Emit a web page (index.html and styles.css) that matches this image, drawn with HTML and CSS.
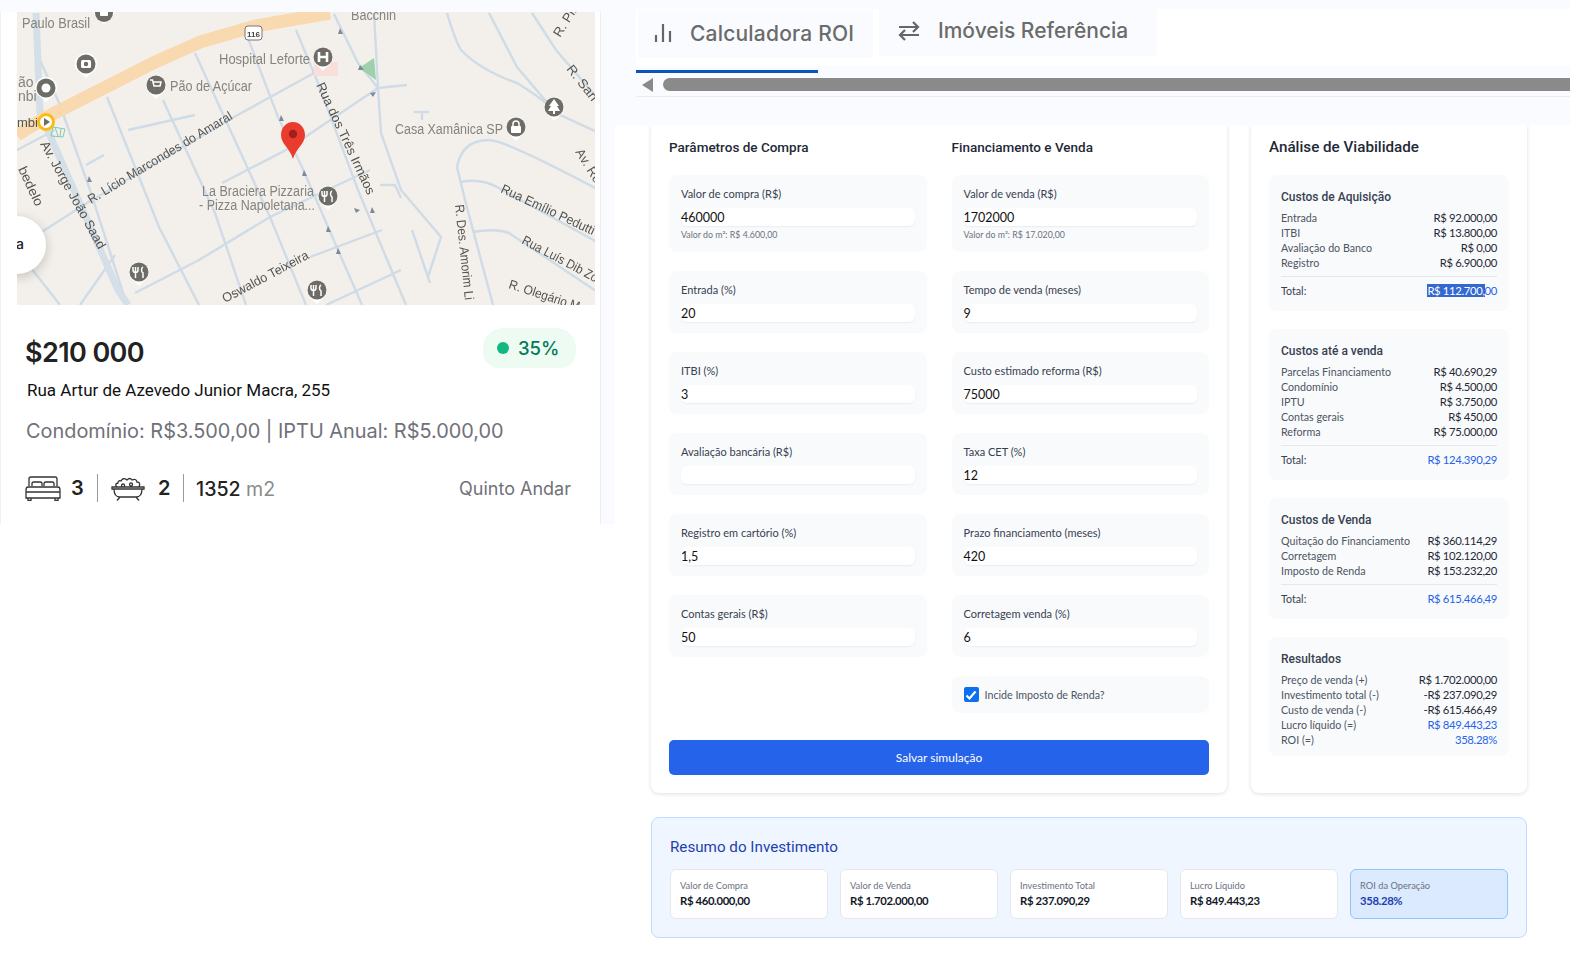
FILE: index.html
```
<!DOCTYPE html>
<html lang="pt-BR">
<head>
<meta charset="utf-8">
<title>Calculadora ROI</title>
<link rel="stylesheet" href="styles.css">
</head>
<body>
<div class="app">
  <section class="listing">
    <div class="listing-card">
      <div class="map">
        <svg class="map-svg" viewBox="17 12 578 293" width="578" height="293">
          <rect x="17" y="12" width="578" height="293" fill="#f3f0eb"/>
          <g class="roads">
            <path d="M40 233L87 203L234 117L314 73"/>
            <path d="M222 183L286 150L378 88L407 85"/>
            <path d="M334 14L358 63L378 88L381 133L401 190L441 237L428 277"/>
            <path d="M296 30L318 83L358 190L406 305"/>
            <path d="M246 33L278 117L302 167L338 250L362 305"/>
            <path d="M195 53L238 147L270 217L306 305"/>
            <path d="M107 97L159 227L199 305"/>
            <path d="M163 100L215 213L246 305"/>
            <path d="M135 293L199 260L270 217L342 183L370 170"/>
            <path d="M326 305L401 270"/>
            <path d="M310 257L382 230"/>
            <path d="M457 167Q462 140 489 140Q505 140 599 190"/>
            <path d="M457 167L465 200L493 305"/>
            <path d="M461 182Q480 178 497 187L599 243"/>
            <path d="M473 232Q495 228 509 233L599 293"/>
            <path d="M447 13Q455 40 461 50Q480 70 517 83Q545 100 556 113L599 133"/>
            <path d="M489 13L517 67L556 113"/>
            <path d="M532 13L556 50L599 100"/>
            <path d="M374 13L378 88"/>
            <path d="M128 130L195 115M86 165L104 155M17 150L55 130"/>
            <path d="M40 60L60 105L90 190L127 305"/>
            <path d="M80 305L115 255M17 250L60 305"/>
            <path d="M414 112H429M422 112V120M380 185L395 185L401 198M412 230L430 283"/>
          </g>
          <path class="avenue" d="M36 13L40 113L118 290L128 305"/>
          <path class="highway" d="M17 135L45 118L155 62L200 42L255 26L330 13"/>
          <path class="park" d="M359 68L374 58L376 80Z"/>
          <rect class="hosp" x="314" y="62" width="24" height="14"/>
          <g class="shields"><rect x="245" y="26" width="17" height="14" rx="3"/></g>
          <text class="shield-t" x="253.500" y="37">116</text>
          <g class="pois">
            <path class="halo" d="M94 11a10 10 0 0 1 20 0c0 7-6 9-10 13c-4-4-10-6-10-13z"/>
            <circle cx="104" cy="13" r="9"/>
            <path class="halo" d="M75 64a11 11 0 0 1 22 0c0 7-7 9-11 14c-4-5-11-7-11-14z"/>
            <circle cx="86" cy="64" r="9.500"/>
            <path class="halo" d="M35 88a11 11 0 0 1 22 0c0 7-7 9-11 14c-4-5-11-7-11-14z"/>
            <circle cx="46" cy="88" r="9.500"/>
            <path class="halo" d="M146 85a10 10 0 0 1 20 0c0 7-6 9-10 14c-4-5-10-7-10-14z"/>
            <circle cx="156" cy="85" r="9.500"/>
            <path class="halo" d="M313 57a10 10 0 0 1 20 0c0 7-6 9-10 14c-4-5-10-7-10-14z"/>
            <circle cx="323" cy="57" r="9.500"/>
            <path class="halo" d="M506 127a10 10 0 0 1 20 0c0 7-6 9-10 14c-4-5-10-7-10-14z"/>
            <circle cx="516" cy="127" r="9.500"/>
            <path class="halo" d="M544 107a10 10 0 0 1 20 0c0 7-6 9-10 14c-4-5-10-7-10-14z"/>
            <circle cx="554" cy="107" r="9.500"/>
            <path class="halo" d="M318 196a10 10 0 0 1 20 0c0 7-6 9-10 14c-4-5-10-7-10-14z"/>
            <circle cx="328" cy="196" r="9.500"/>
            <path class="halo" d="M129 272a10 10 0 0 1 20 0c0 7-6 9-10 14c-4-5-10-7-10-14z"/>
            <circle cx="139" cy="272" r="9.500"/>
            <path class="halo" d="M307 290a10 10 0 0 1 20 0c0 7-6 9-10 14c-4-5-10-7-10-14z"/>
            <circle cx="317" cy="290" r="9.500"/>
          </g>
          <g class="poi-glyphs">
            <rect x="100" y="10" width="8" height="6" rx="1"/>
            <rect x="81" y="60" width="10" height="8" rx="1.500"/><circle class="dk" cx="86" cy="64" r="2.200"/>
            <circle cx="46" cy="88" r="4.500"/>
            <path class="cart" d="M150 80h2.500l1.500 6h6l1-4h-7.500M154.500 89.500h.1M159.500 89.500h.1"/>
            <path class="cart cart-b" d="M319 52v10M327 52v10M319 57h8"/>
            <rect x="511" y="126" width="10" height="7" rx="1"/>
            <path class="cart" d="M513 126v-2a3 3 0 0 1 6 0v2"/>
            <path d="M554 99l5 7h-2l3 5h-5v3h-2v-3h-5l3-5h-2z"/>
            <path class="cart" d="M322 191v3a2.500 2.500 0 0 0 5 0v-3M324.500 191v11M332 191c-2 1-2 5 0 6v5"/>
            <path class="cart" d="M133 267v3a2.500 2.500 0 0 0 5 0v-3M135.500 267v11M143 267c-2 1-2 5 0 6v5"/>
            <path class="cart" d="M311 285v3a2.500 2.500 0 0 0 5 0v-3M313.500 285v11M321 285c-2 1-2 5 0 6v5"/>
          </g>
          <circle class="ring" cx="46" cy="122" r="7.500"/>
          <path class="ring-play" d="M44 118l6 4l-6 4z"/>
          <path class="tracks" d="M53 127l12 2l-2 8l-12-1zM55 127l3 9M61 129l-1 8"/>
          <g class="arrows">
            <path d="M340 28l3 6h-5zM281 115l3 6h-5zM304 170l3 6h-5zM328 226l3 6h-5zM338 248l3 6h-5z"/>
            <path d="M89 176l3 6h-5zM372 207l3 6h-5zM360 65l4 5h-6zM354 208l6 2l-4 3zM370 93l6-1l-3 5z"/>
          </g>
          <g class="labels">
            <text x="22" y="28" textLength="68" lengthAdjust="spacingAndGlyphs">Paulo Brasil</text>
            <text x="351" y="20" textLength="45" lengthAdjust="spacingAndGlyphs">Bacchin</text>
            <text x="219" y="64" textLength="91" lengthAdjust="spacingAndGlyphs">Hospital Leforte</text>
            <text x="170" y="91" textLength="82" lengthAdjust="spacingAndGlyphs">Pão de Açúcar</text>
            <text x="395" y="134" textLength="108" lengthAdjust="spacingAndGlyphs">Casa Xamânica SP</text>
            <text x="202" y="196" textLength="112" lengthAdjust="spacingAndGlyphs">La Braciera Pizzaria</text>
            <text x="199" y="210" textLength="116" lengthAdjust="spacingAndGlyphs">- Pizza Napoletana...</text>
            <text x="18" y="87">ão</text>
            <text x="18" y="101">nbi</text>
          </g>
          <g class="labels dark">
            <text x="17" y="127">mbi</text>
            <text transform="translate(40 144) rotate(61)" textLength="121" lengthAdjust="spacingAndGlyphs">Av. Jorge João Saad</text>
            <text transform="translate(18 169) rotate(65)" textLength="42" lengthAdjust="spacingAndGlyphs">bedelo</text>
            <text transform="translate(91 204) rotate(-31)" textLength="166" lengthAdjust="spacingAndGlyphs">R. Lício Marcondes do Amaral</text>
            <text transform="translate(316 85) rotate(65)" textLength="122" lengthAdjust="spacingAndGlyphs">Rua dos Três Irmãos</text>
            <text transform="translate(225 303) rotate(-28)" textLength="96" lengthAdjust="spacingAndGlyphs">Oswaldo Teixeira</text>
            <text transform="translate(455 205) rotate(84)" textLength="96" lengthAdjust="spacingAndGlyphs">R. Des. Amorim Li</text>
            <text transform="translate(500 192) rotate(25)" textLength="102" lengthAdjust="spacingAndGlyphs">Rua Emílio Pedutti</text>
            <text transform="translate(521 243) rotate(28)" textLength="84" lengthAdjust="spacingAndGlyphs">Rua Luís Dib Zo</text>
            <text transform="translate(508 288) rotate(18)" textLength="74" lengthAdjust="spacingAndGlyphs">R. Olegário M</text>
            <text transform="translate(560 38) rotate(-58)" textLength="32" lengthAdjust="spacingAndGlyphs">R. Pil</text>
            <text transform="translate(566 69) rotate(52)" textLength="42" lengthAdjust="spacingAndGlyphs">R. San</text>
            <text transform="translate(575 152) rotate(58)" textLength="38" lengthAdjust="spacingAndGlyphs">Av. Ro</text>
          </g>
          <path class="pin" d="M293 122c7 0 12 6 12 13c0 9-9 13-12 24c-3-11-12-15-12-24c0-7 5-13 12-13z"/>
          <circle class="pin-dot" cx="293" cy="134" r="4.200"/>
        </svg>
        <div class="map-bubble"><span>a</span></div>
      </div>
      <div class="info">
        <div class="price-row">
          <h2 class="price">$210 000</h2>
          <div class="badge"><i class="badge-dot"></i>35%</div>
        </div>
        <p class="address">Rua Artur de Azevedo Junior Macra, 255</p>
        <p class="fees">Condomínio: R$3.500,00 | IPTU Anual: R$5.000,00</p>
        <div class="stats">
          <svg class="ic-bed" viewBox="0 0 36 26" width="36" height="26">
            <path d="M4 11V3.500Q4 2 6 2H30Q32 2 32 3.500V11M7 11V8.500Q7 7 9 7H15Q17 7 17 8.500V11M19 11V8.500Q19 7 21 7H27Q29 7 29 8.500V11M3 12H33Q35 12 35 15V23H1V15Q1 12 3 12ZM1 17H35M3 23V25.500H6V23M30 23V25.500H33V23"/>
          </svg>
          <b class="stat-n">3</b>
          <span class="sep"></span>
          <svg class="ic-bath" viewBox="0 0 34 26" width="34" height="26">
            <path d="M1 12H33V14H1ZM3 14Q3 22 9 22H25Q31 22 31 14M9 22L6 25.500M25 22L28 25.500M6 12Q3 9 7 8Q7 5 10 6Q12 2 16 5Q19 2 21 5Q25 3 26 7Q30 7 28 12M12 9a1.500 1.500 0 1 0 .1 0M20 8a1.500 1.500 0 1 0 .1 0"/>
          </svg>
          <b class="stat-n">2</b>
          <span class="sep"></span>
          <span class="area"><b>1352</b> m2</span>
          <span class="source">Quinto Andar</span>
        </div>
      </div>
    </div>
  </section>

  <main class="roi">
    <div class="roi-top">
      <nav class="tabs">
        <a class="tab tab-active">
          <svg class="tab-ic" viewBox="0 0 18 20" width="18" height="20"><path d="M2 19v-7M9 19V1M16 19v-11"/></svg>
          <span>Calculadora ROI</span>
        </a>
        <a class="tab tab-other">
          <svg class="tab-ic" viewBox="0 0 22 20" width="22" height="20"><path d="M1 6H20M15 1L20 6L15 11M21 14H2M7 9L2 14L7 19"/></svg>
          <span>Imóveis Referência</span>
        </a>
      </nav>
      <div class="indicator"></div>
      <div class="scrollbar">
        <i class="sb-arrow"></i>
        <i class="sb-thumb"></i>
      </div>
    </div>

    <div class="content">
      <div class="cards">
        <section class="card form-card">
          <div class="form-grid">
            <div class="col">
              <h3 class="card-title">Parâmetros de Compra</h3>
              <div class="field"><label>Valor de compra (R$)</label><div class="input">460000</div><small>Valor do m²: R$ 4.600,00</small></div>
              <div class="field"><label>Entrada (%)</label><div class="input">20</div></div>
              <div class="field"><label>ITBI (%)</label><div class="input">3</div></div>
              <div class="field"><label>Avaliação bancária (R$)</label><div class="input"></div></div>
              <div class="field"><label>Registro em cartório (%)</label><div class="input">1,5</div></div>
              <div class="field"><label>Contas gerais (R$)</label><div class="input">50</div></div>
            </div>
            <div class="col">
              <h3 class="card-title">Financiamento e Venda</h3>
              <div class="field"><label>Valor de venda (R$)</label><div class="input">1702000</div><small>Valor do m²: R$ 17.020,00</small></div>
              <div class="field"><label>Tempo de venda (meses)</label><div class="input">9</div></div>
              <div class="field"><label>Custo estimado reforma (R$)</label><div class="input">75000</div></div>
              <div class="field"><label>Taxa CET (%)</label><div class="input">12</div></div>
              <div class="field"><label>Prazo financiamento (meses)</label><div class="input">420</div></div>
              <div class="field"><label>Corretagem venda (%)</label><div class="input">6</div></div>
              <div class="field check-field">
                <span class="checkbox"><svg viewBox="0 0 14 14" width="14" height="14"><path d="M2.500 7.500L5.500 10.500L11.500 3.500"/></svg></span>
                Incide Imposto de Renda?
              </div>
            </div>
          </div>
          <button class="save">Salvar simulação</button>
        </section>

        <section class="card analysis-card">
          <h3 class="card-title analysis-title">Análise de Viabilidade</h3>
          <div class="block">
            <h4>Custos de Aquisição</h4>
            <div class="line"><span>Entrada</span><b>R$ 92.000,00</b></div>
            <div class="line"><span>ITBI</span><b>R$ 13.800,00</b></div>
            <div class="line"><span>Avaliação do Banco</span><b>R$ 0,00</b></div>
            <div class="line"><span>Registro</span><b>R$ 6.900,00</b></div>
            <div class="line total"><span>Total:</span><b class="blue"><mark>R$ 112.700,</mark>00</b></div>
          </div>
          <div class="block">
            <h4>Custos até a venda</h4>
            <div class="line"><span>Parcelas Financiamento</span><b>R$ 40.690,29</b></div>
            <div class="line"><span>Condomínio</span><b>R$ 4.500,00</b></div>
            <div class="line"><span>IPTU</span><b>R$ 3.750,00</b></div>
            <div class="line"><span>Contas gerais</span><b>R$ 450,00</b></div>
            <div class="line"><span>Reforma</span><b>R$ 75.000,00</b></div>
            <div class="line total"><span>Total:</span><b class="blue">R$ 124.390,29</b></div>
          </div>
          <div class="block">
            <h4>Custos de Venda</h4>
            <div class="line"><span>Quitação do Financiamento</span><b>R$ 360.114,29</b></div>
            <div class="line"><span>Corretagem</span><b>R$ 102.120,00</b></div>
            <div class="line"><span>Imposto de Renda</span><b>R$ 153.232,20</b></div>
            <div class="line total"><span>Total:</span><b class="blue">R$ 615.466,49</b></div>
          </div>
          <div class="block block-last">
            <h4>Resultados</h4>
            <div class="line"><span>Preço de venda (+)</span><b>R$ 1.702.000,00</b></div>
            <div class="line"><span>Investimento total (-)</span><b>-R$ 237.090,29</b></div>
            <div class="line"><span>Custo de venda (-)</span><b>-R$ 615.466,49</b></div>
            <div class="line"><span>Lucro líquido (=)</span><b class="blue">R$ 849.443,23</b></div>
            <div class="line"><span>ROI (=)</span><b class="blue">358.28%</b></div>
          </div>
        </section>
      </div>

      <section class="summary">
        <h3>Resumo do Investimento</h3>
        <div class="summary-grid">
          <div class="stat"><span>Valor de Compra</span><b>R$ 460.000,00</b></div>
          <div class="stat"><span>Valor de Venda</span><b>R$ 1.702.000,00</b></div>
          <div class="stat"><span>Investimento Total</span><b>R$ 237.090,29</b></div>
          <div class="stat"><span>Lucro Líquido</span><b>R$ 849.443,23</b></div>
          <div class="stat stat-hl"><span>ROI da Operação</span><b>358.28%</b></div>
        </div>
      </section>
    </div>
  </main>
</div>
</body>
</html>
```
FILE: styles.css
```
* { box-sizing: border-box; }
html, body { margin: 0; padding: 0; background: #fff; }
body { width: 1570px; height: 962px; overflow: hidden; font-family: Lato, Roboto, "Liberation Sans", sans-serif; color: #1f2937; }
.app { display: flex; align-items: flex-start; }

/* listing */
.listing { width: 615px; height: 524px; flex: none; background: #fafbfe; padding-top: 12px; }
.listing-card { width: 601px; height: 512px; background: #fff; border-left: 1px solid #f1f1f1; border-right: 1px solid #eeeeee; }
.map { position: relative; width: 578px; height: 293px; margin-left: 16px; overflow: hidden; }
.map-svg { display: block; filter: blur(0.35px); }
.roads path { fill: none; stroke: #cfdbe6; stroke-width: 2.4; }
.avenue { fill: none; stroke: #d5dfe7; stroke-width: 7; }
.highway { fill: none; stroke: #f9d9af; stroke-width: 13; }
.park { fill: #9fd0ac; }
.hosp { fill: #f8dfdc; }
.shields rect { fill: #fff; stroke: #777; }
.shield-t { font: 700 8px "Liberation Sans", sans-serif; fill: #444; text-anchor: middle; }
.pois circle { fill: #6d6c66; }
.halo { fill: #fff; }
.poi-glyphs { fill: #fff; }
.poi-glyphs .dk { fill: #6d6c66; }
.poi-glyphs .cart { fill: none; stroke: #fff; stroke-width: 1.5; }
.poi-glyphs .cart-b { stroke-width: 2.6; }
.ring { fill: #fff; stroke: #fbbc12; stroke-width: 3; }
.ring-play { fill: #6d6c66; }
.tracks { fill: none; stroke: #7fcdb0; stroke-width: 1; }
.arrows { fill: #7d8a98; }
.labels text { font: 14px "Liberation Sans", sans-serif; fill: #85837e; }
.labels.dark text { font-size: 13px; fill: #54534f; }
.pin { fill: #ea3b2f; }
.pin-dot { fill: #a3201a; }
.map-bubble { position: absolute; left: -29px; top: 204px; width: 58px; height: 58px; border-radius: 50%; background: #fff; box-shadow: 0 3px 12px rgba(0,0,0,.2); display: flex; align-items: center; justify-content: flex-end; padding: 0 22px 4px 0; font: 500 14px Inter, sans-serif; color: #222; }
.info { padding: 22px 24px 0 24px; }
.price-row { display: flex; justify-content: space-between; align-items: flex-start; height: 52px; padding-top: 1px; }
.price { margin: 0; padding-top: 8px; font: 600 27px/34px Inter, sans-serif; color: #222; letter-spacing: -.6px; }
.badge { width: 93px; height: 40px; border-radius: 20px 20px 16px 16px; background: #edfbf3; display: flex; align-items: center; gap: 9px; padding-left: 14px; font: 500 18.500px Inter, sans-serif; color: #047857; }
.badge-dot { width: 12px; height: 12px; border-radius: 50%; background: #10b981; }
.address { margin: 0 0 0 2px; font: 400 17px/22px Roboto, sans-serif; color: #111; }
.fees { margin: 17px 0 0 1px; font: 400 19.900px/26px Inter, sans-serif; color: #71717a; }
.stats { margin-top: 30px; display: flex; align-items: center; height: 28px; }
.stats svg { fill: none; stroke: #333; stroke-width: 1.3; flex: none; }
.stat-n { margin-left: 10px; font: 600 20px Inter, sans-serif; color: #222; width: 13px; }
.ic-bath + .stat-n { margin-left: 13px; width: 12px; }
.sep { width: 1px; height: 28px; background: #9a9a9a; margin: 0 13px; }
.area { margin-left: -1px; padding-top: 1px; font: 400 19.600px Inter, sans-serif; color: #8a8a8a; }
.area b { font-weight: 500; color: #222; }
.source { margin-left: auto; font: 400 18px Inter, sans-serif; color: #71717a; padding-right: 5px; }

/* roi */
.roi { flex: 1; min-width: 0; }
.roi-top { height: 125px; background: #fafbfe; padding-top: 9px; }
.tabs { display: flex; align-items: flex-start; gap: 6px; height: 57px; margin-left: 21px; padding-left: 2px; background: #fff; }
.tab { display: flex; align-items: center; font: 500 21px Inter, sans-serif; color: #6b6b6b; background: #fafbfe; }
.tab-active span { letter-spacing: .2px; }
.tab-active { width: 235px; height: 48px; margin-top: 1px; gap: 18px; padding: 0 0 2px 16px; }
.tab-other { width: 278px; height: 47px; gap: 18px; padding: 0 0 4px 19px; }
.tab-ic { fill: none; stroke: #666; stroke-width: 2.2; flex: none; }
.indicator { width: 182px; height: 3px; margin: 4px 0 0 21px; background: #0a56b8; }
.scrollbar { height: 24px; margin-left: 21px; border-bottom: 1px solid #ececec; display: flex; align-items: flex-start; padding: 5px 0 0 6px; gap: 10px; }
.sb-arrow { width: 0; height: 0; border-style: solid; border-width: 7px 11px 7px 0; border-color: transparent #8a8a8a transparent transparent; }
.sb-thumb { flex: 1; height: 13px; border-radius: 7px 0 0 7px; background: #8a8a8a; }

.content { padding: 0 43px 0 36px; }
.cards { display: grid; grid-template-columns: 576px 276px; gap: 24px; }
.card { background: #fff; border-radius: 0 0 8px 8px; box-shadow: 0 1px 4px rgba(0,0,0,.13); padding: 12px 18px 18px; clip-path: inset(0 -8px -8px -8px); }
.form-grid { display: grid; grid-template-columns: 1fr 1fr; column-gap: 25px; }
.col { display: flex; flex-direction: column; }
.card-title { margin: 0 0 18px; font: 500 13.500px/20px Roboto, sans-serif; color: #1f2937; }
.field { background: #f9fafb; border-radius: 8px; padding: 12px 12px 11px; margin-bottom: 19px; }
.field label { display: block; font-size: 11px; line-height: 14px; color: #374151; }
.input { height: 18px; margin-top: 7px; background: #fff; border-radius: 6px; box-shadow: 0 1px 2px rgba(0,0,0,.06); font-size: 12.500px; line-height: 19px; color: #111; }
.field small { display: block; margin-top: 3px; font-size: 8.800px; line-height: 12px; color: #6b7280; }
.check-field { height: 37px; padding: 0 0 0 12px; margin: 0; display: flex; align-items: center; gap: 6px; font-size: 10.700px; color: #4b5563; }
.checkbox { width: 15px; height: 15px; border-radius: 2px; background: #0b6ff0; display: flex; align-items: center; justify-content: center; }
.checkbox svg { fill: none; stroke: #fff; stroke-width: 2.2; }
.save { display: block; width: 100%; height: 35px; margin-top: 27px; border: 0; border-radius: 5px; background: #2563eb; color: #fff; font: 400 12px Lato, sans-serif; }

.analysis-title { font-size: 15.200px; color: #1f2937; }
.block { background: #f9fafb; border-radius: 8px; padding: 12px 12px 13px; margin-bottom: 18px; }
.block-last { padding: 12px 12px 9px; margin-bottom: 0; }
.block h4 { margin: 0 0 3px; font: 500 12px/20px Roboto, sans-serif; color: #374151; }
.line { display: flex; justify-content: space-between; font-size: 10.700px; line-height: 15px; color: #4b5563; }
.line b { font-weight: 400; color: #1f2937; font-size: 11.300px; letter-spacing: -.35px; }
.line b.blue { color: #2563eb; }
.total { margin-top: 6px; padding-top: 6px; border-top: 1px solid #e5e7eb; color: #374151; }
mark { background: #3367d1; color: #fff; }

.summary { margin-top: 24px; height: 121px; padding: 18px; border: 1px solid #bfdbfe; border-radius: 8px; background: #eff6ff; }
.summary h3 { margin: 0 0 11px; font: 400 15.200px/22px Roboto, sans-serif; color: #1e40af; }
.summary-grid { display: grid; grid-template-columns: repeat(5, 1fr); gap: 12px; }
.stat { height: 50px; padding: 9px 9px; background: #fff; border: 1px solid #e5e7eb; border-radius: 6px; display: flex; flex-direction: column; }
.stat span { font-size: 9.300px; line-height: 14px; color: #6b7280; }
.stat b { font-size: 11.300px; line-height: 16px; font-weight: 700; letter-spacing: -.35px; color: #111827; }
.stat-hl { background: #dbeafe; border-color: #93c5fd; }
.stat-hl b { color: #1e40af; }
```
